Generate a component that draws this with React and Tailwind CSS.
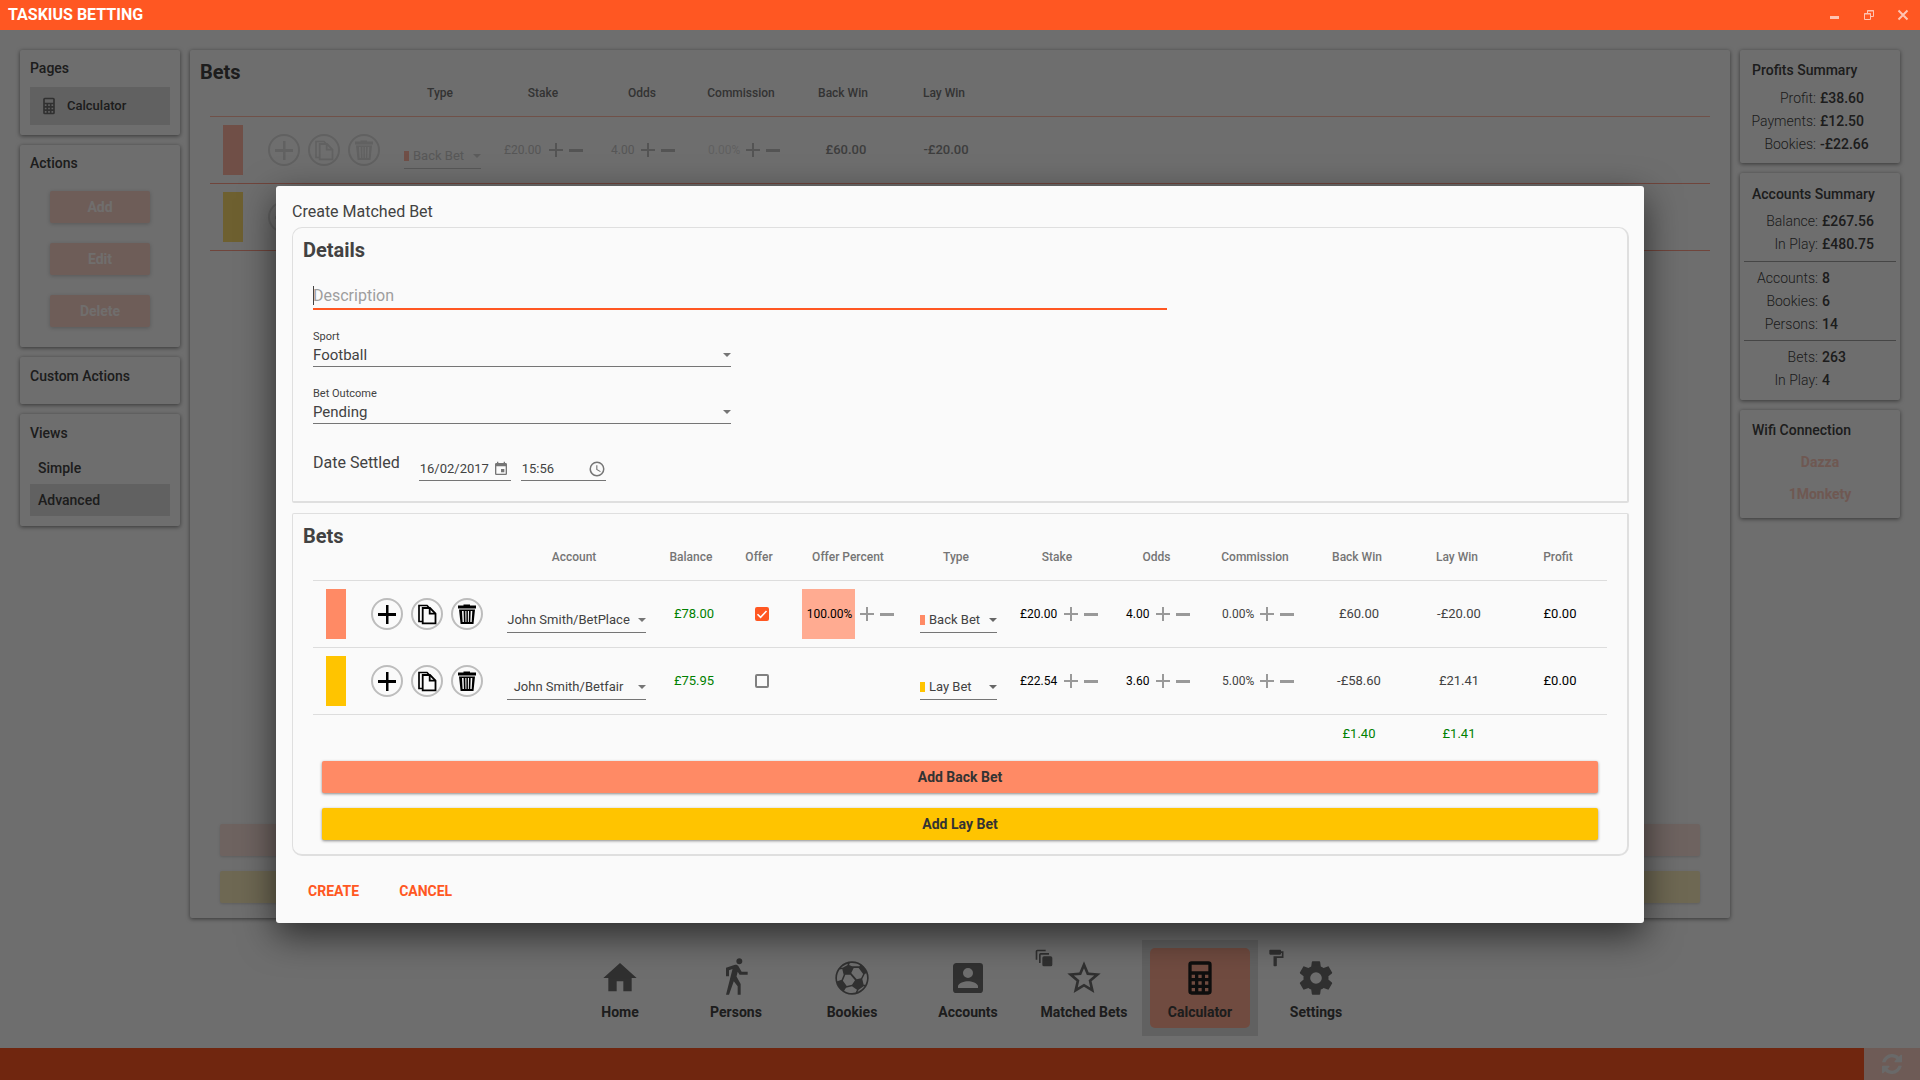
import React from "react";

const PATHS = {
  home: "M10,20V14H14V20H19V12H22L12,3L2,12H5V20H10Z",
  walk: "M14.12,10H19V8.2H15.38L13.38,4.87C13.08,4.37 12.54,4.03 11.92,4.03C11.74,4.03 11.58,4.06 11.42,4.11L6,5.8V11H7.8V7.33L9.91,6.67L6,22H7.8L10.67,13.89L13,17V22H14.8V15.59L12.31,11.05L13.04,8.18M14,3.8C15,3.8 15.8,3 15.8,2C15.8,1 15,0.2 14,0.2C13,0.2 12.2,1 12.2,2C12.2,3 13,3.8 14,3.8Z",
  soccer:
    "M12,2A10,10 0 0,0 2,12A10,10 0 0,0 12,22A10,10 0 0,0 22,12A10,10 0 0,0 12,2M12,3C13.76,3 15.4,3.53 16.78,4.41L16.5,5H13L12,5L10.28,4.16L10.63,3.13C11.08,3.05 11.53,3 12,3M9.53,3.38L9.19,4.41L6.63,5.69L5.38,5.94C6.5,4.73 7.92,3.84 9.53,3.38M13,6H16L18.69,9.59L17.44,12.16L14.81,12.78L11.53,8.94L13,6M6.16,6.66L7,10L5.78,13.06L3.22,13.94C3.08,13.31 3,12.67 3,12C3,10.1 3.59,8.36 4.59,6.91L6.16,6.66M20.56,9.22C20.85,10.09 21,11.03 21,12C21,13.44 20.63,14.79 20.03,16H19L18.16,12.66L19.66,9.66L20.56,9.22M8,10H11L13.81,13.28L12,16L8.84,16.78L6.53,13.69L8,10M12,17L15,19L14.13,20.72C13.44,20.88 12.73,21 12,21C10.25,21 8.63,20.5 7.25,19.63L8.41,17.91L12,17M19,17H19.5C18.5,18.5 17,19.67 15.31,20.34L16,19L19,17Z",
  account:
    "M6,17C6,15 10,13.9 12,13.9C14,13.9 18,15 18,17V18H6M15,9A3,3 0 0,1 12,12A3,3 0 0,1 9,9A3,3 0 0,1 12,6A3,3 0 0,1 15,9M3,5V19A2,2 0 0,0 5,21H19A2,2 0 0,0 21,19V5A2,2 0 0,0 19,3H5C3.89,3 3,3.9 3,5Z",
  star: "M12,15.39L8.24,17.66L9.23,13.38L5.91,10.5L10.29,10.13L12,6.09L13.71,10.13L18.09,10.5L14.77,13.38L15.76,17.66M22,9.24L14.81,8.63L12,2L9.19,8.63L2,9.24L7.45,13.97L5.82,21L12,17.27L18.18,21L16.54,13.97L22,9.24Z",
  calculator:
    "M7,2H17A2,2 0 0,1 19,4V20A2,2 0 0,1 17,22H7A2,2 0 0,1 5,20V4A2,2 0 0,1 7,2M7,4V8H17V4H7M7,10V12H9V10H7M11,10V12H13V10H11M15,10V12H17V10H15M7,14V16H9V14H7M11,14V16H13V14H11M15,14V16H17V14H15M7,18V20H9V18H7M11,18V20H13V18H11M15,18V20H17V18H15Z",
  settings:
    "M12,15.5A3.5,3.5 0 0,1 8.5,12A3.5,3.5 0 0,1 12,8.5A3.5,3.5 0 0,1 15.5,12A3.5,3.5 0 0,1 12,15.5M19.43,12.97C19.47,12.65 19.5,12.33 19.5,12C19.5,11.67 19.47,11.34 19.43,11L21.54,9.37C21.73,9.22 21.78,8.95 21.66,8.73L19.66,5.27C19.54,5.05 19.27,4.96 19.05,5.05L16.56,6.05C16.04,5.66 15.5,5.32 14.87,5.07L14.5,2.42C14.46,2.18 14.25,2 14,2H10C9.75,2 9.54,2.18 9.5,2.42L9.13,5.07C8.5,5.32 7.96,5.66 7.44,6.05L4.95,5.05C4.73,4.96 4.46,5.05 4.34,5.27L2.34,8.73C2.21,8.95 2.27,9.22 2.46,9.37L4.57,11C4.53,11.34 4.5,11.67 4.5,12C4.5,12.33 4.53,12.65 4.57,12.97L2.46,14.63C2.27,14.78 2.21,15.05 2.34,15.27L4.34,18.73C4.46,18.95 4.73,19.03 4.95,18.95L7.44,17.94C7.96,18.34 8.5,18.68 9.13,18.93L9.5,21.58C9.54,21.82 9.75,22 10,22H14C14.25,22 14.46,21.82 14.5,21.58L14.87,18.93C15.5,18.67 16.04,18.34 16.56,17.94L19.05,18.95C19.27,19.03 19.54,18.95 19.66,18.73L21.66,15.27C21.78,15.05 21.73,14.78 21.54,14.63L19.43,12.97Z",
  layers:
    "M4,2A2,2 0 0,0 2,4V14H4V4H14V2H4M8,6A2,2 0 0,0 6,8V18H8V8H18V6H8M12,10A2,2 0 0,0 10,12V20A2,2 0 0,0 12,22H20A2,2 0 0,0 22,20V12A2,2 0 0,0 20,10H12Z",
  paint:
    "M18,4V3A1,1 0 0,0 17,2H5A1,1 0 0,0 4,3V7A1,1 0 0,0 5,8H17A1,1 0 0,0 18,7V6H19V10H9V21A1,1 0 0,0 10,22H12A1,1 0 0,0 13,21V12H21V4H18Z",
  calendar:
    "M19,19H5V8H19M16,1V3H8V1H6V3H5C3.89,3 3,3.89 3,5V19A2,2 0 0,0 5,21H19A2,2 0 0,0 21,19V5C21,3.89 20.1,3 19,3H18V1M17,12H12V17H17V12Z",
  clock:
    "M12,20A8,8 0 0,0 20,12A8,8 0 0,0 12,4A8,8 0 0,0 4,12A8,8 0 0,0 12,20M12,2A10,10 0 0,1 22,12A10,10 0 0,1 12,22C6.47,22 2,17.5 2,12A10,10 0 0,1 12,2M12.5,7V12.25L17,14.92L16.25,16.15L11,13V7H12.5Z",
};

function Icon({ name, className }) {
  return (
    <svg viewBox="0 0 24 24" className={className} fill="currentColor" aria-hidden="true">
      <path d={PATHS[name]} />
    </svg>
  );
}

function Arrow({ className }) {
  return (
    <svg viewBox="0 0 8 4" className={`pointer-events-none h-1 w-2 shrink-0 ${className}`} fill="currentColor" aria-hidden="true">
      <path d="M0 0H8L4 4Z" />
    </svg>
  );
}

function ActionIcons({ faded }) {
  const tone = faded ? "border-[#dcdcdc] text-[#dcdcdc]" : "border-[#bdbdbd] text-black";
  const btn = `flex h-8 w-8 items-center justify-center rounded-full border-2 ${tone}`;
  return (
    <div className="flex gap-2 pl-2.5">
      <button type="button" aria-label="Add row" className={btn}>
        <svg viewBox="0 0 32 32" className="h-8 w-8 shrink-0" fill="currentColor">
          <path d="M7 15H15V7H17.500V15H25V18H17.500V26H15V18H7Z" />
        </svg>
      </button>
      <button type="button" aria-label="Copy row" className={btn}>
        <svg viewBox="0 0 32 32" className="h-8 w-8 shrink-0" fill="none" stroke="currentColor">
          <path d="M11 23.500H8V7.500H16L18 9.500" strokeWidth="1.700" />
          <path d="M11.700 10H19L24.500 15.500V25.300H11.700Z" strokeWidth="1.800" />
          <path d="M18.700 10V15.700H24.500" strokeWidth="1.800" />
        </svg>
      </button>
      <button type="button" aria-label="Delete row" className={btn}>
        <svg viewBox="0 0 32 32" className="h-8 w-8 shrink-0" fill="currentColor">
          <path d="M12.500 6.500H19V7.600H25V10.400H7V7.600H12.500Z" />
          <path
            fillRule="evenodd"
            d="M8 11.400H24L22.500 26H9.600ZM11 13L11.600 24H12.900L12.600 13ZM14.300 13L14.500 24H15.400V13ZM16.900 13V24H17.800L18 13ZM19.700 13L19.300 24H20.700L21.300 13Z"
          />
        </svg>
      </button>
    </div>
  );
}

function Stepper({ value, label, width, valueClass, tone = "text-[#999999]" }) {
  return (
    <div className="flex items-center">
      <span className={`${width} ${valueClass}`}>{value}</span>
      <button type="button" aria-label={`Increase ${label}`} className={tone}>
        <svg viewBox="0 0 14 14" className="h-3.5 w-3.5" fill="currentColor">
          <path d="M6 0H8V6H14V8H8V14H6V8H0V6H6Z" />
        </svg>
      </button>
      <button type="button" aria-label={`Decrease ${label}`} className={`ml-1.5 ${tone}`}>
        <svg viewBox="0 0 14 14" className="h-3.5 w-3.5" fill="currentColor">
          <path d="M0 6H14V9H0Z" />
        </svg>
      </button>
    </div>
  );
}

function TypeSelect({ value, swatch, tone, border }) {
  return (
    <div className="ml-2.5 mt-4 w-[77px]">
      <div className={`flex h-[22px] items-center border-b pb-1 ${border} ${tone}`}>
        <span className={`h-2.5 w-[5px] shrink-0 ${swatch}`} />
        <select aria-label="Bet type" defaultValue={value} className="ml-1 w-full appearance-none bg-transparent text-[13px] leading-4 outline-none">
          <option>Back Bet</option>
          <option>Lay Bet</option>
        </select>
        <Arrow className="opacity-80" />
      </div>
    </div>
  );
}

const SIDE_CARD = "rounded-xs bg-[#fafafa] shadow-[0_1px_4px_rgba(0,0,0,0.5)]";

function SideNav() {
  return (
    <aside className="flex w-40 shrink-0 flex-col gap-2.5 text-sm font-medium leading-5 text-[#424242]">
      <section className={`${SIDE_CARD} px-2.5 pb-2.5 pt-2`}>
        <h2>Pages</h2>
        <button type="button" className="mt-[9px] flex h-[38px] w-full items-center bg-[#dcdcdc] pl-[9px] text-[13px]">
          <Icon name="calculator" className="h-5 w-5 text-[#6d6d6d]" />
          <span className="ml-2">Calculator</span>
        </button>
      </section>
      <section className={`${SIDE_CARD} px-2.5 pb-5 pt-2`}>
        <h2>Actions</h2>
        <div className="mt-[18px] flex flex-col items-center gap-5">
          {["Add", "Edit", "Delete"].map((a) => (
            <button key={a} type="button" disabled className="h-8 w-[100px] rounded-xs bg-[#fad3c8] font-bold text-[#fffaf8] shadow-[0_1px_4px_rgba(0,0,0,0.2)]">
              {a}
            </button>
          ))}
        </div>
      </section>
      <section className={`${SIDE_CARD} px-2.5 pb-[18px] pt-[9px]`}>
        <h2>Custom Actions</h2>
      </section>
      <section className={`${SIDE_CARD} px-2.5 pb-2.5 pt-[9px]`}>
        <h2>Views</h2>
        <button type="button" className="mt-[9px] flex h-8 w-full items-center pl-2">
          Simple
        </button>
        <button type="button" className="flex h-8 w-full items-center bg-[#dcdcdc] pl-2">
          Advanced
        </button>
      </section>
    </aside>
  );
}

function CalculatorPanel() {
  const rows = [
    { type: "Back Bet", color: "bg-[#ffb5a3]", chip: "bg-[#ffb5a3]", stake: "£20.00", odds: "4.00", comm: "0.00%", back: "£60.00", lay: "-£20.00" },
    { type: "Lay Bet", color: "bg-[#fada6d]", chip: "bg-[#fada6d]", stake: "£22.54", odds: "3.60", comm: "5.00%", back: "-£58.60", lay: "£21.41" },
  ];
  return (
    <section className={`${SIDE_CARD} flex min-w-0 flex-1 flex-col pb-[15px] pt-2.5`}>
      <h2 className="pl-2.5 text-xl font-bold leading-6 text-[#424242]">Bets</h2>
      <div className="mx-5">
        <table className="w-full table-fixed border-collapse text-xs">
          <colgroup>
            <col className="w-12" />
            <col className="w-[136px]" />
            <col className="w-[92px]" />
            <col className="w-[114px]" />
            <col className="w-[84px]" />
            <col className="w-[114px]" />
            <col className="w-[90px]" />
            <col className="w-[112px]" />
            <col />
          </colgroup>
          <thead>
            <tr className="border-b border-[#ffb9a6] text-[#757575]">
              {["", "", "Type", "Stake", "Odds", "Commission", "Back Win", "Lay Win", ""].map((h, i) => (
                <th key={i} className="px-0 pb-[15px] pt-px font-medium leading-4">
                  {h}
                </th>
              ))}
            </tr>
          </thead>
          <tbody>
            {rows.map((r) => (
              <tr key={r.type} className="h-[67px] border-b border-[#ff9d88] text-[13px] text-[#d0d0d0]">
                <td className="pl-[13px]">
                  <div className={`h-[50px] w-5 ${r.color}`} />
                </td>
                <td>
                  <ActionIcons faded />
                </td>
                <td>
                  <TypeSelect value={r.type} swatch={r.chip} tone="text-[#c8c8c8]" border="border-[#c8c8c8]" />
                </td>
                <td className="pl-[18px]">
                  <Stepper value={r.stake} label="stake" width="w-[45px]" valueClass="text-[12px] text-[#c4c4c4]" tone="text-[#c0c0c0]" />
                </td>
                <td className="pl-[11px]">
                  <Stepper value={r.odds} label="odds" width="w-[30px]" valueClass="text-[12px] text-[#c4c4c4]" tone="text-[#c0c0c0]" />
                </td>
                <td className="pl-6">
                  <Stepper value={r.comm} label="commission" width="w-[38px]" valueClass="text-[12px] text-[#dadada]" tone="text-[#c0c0c0]" />
                </td>
                <td className="pl-1.5 text-center font-medium text-[#8c8c8c]">{r.back}</td>
                <td className="pl-1 text-center font-medium text-[#8c8c8c]">{r.lay}</td>
                <td />
              </tr>
            ))}
          </tbody>
        </table>
      </div>
      <div className="mx-[30px] mt-auto flex flex-col gap-[15px]">
        <button type="button" aria-label="Add back bet to calculator" className="h-8 rounded-xs bg-[#fae2db] shadow-[0_1px_3px_rgba(0,0,0,0.15)]" />
        <button type="button" aria-label="Add lay bet to calculator" className="h-8 rounded-xs bg-[#faecbe] shadow-[0_1px_3px_rgba(0,0,0,0.15)]" />
      </div>
    </section>
  );
}

function Rows({ items, labelWidth }) {
  return (
    <dl>
      {items.map(([k, v]) => (
        <div key={k} className="flex leading-[23px]">
          <dt className={`${labelWidth} text-right font-light`}>{k}:</dt>
          <dd className="ml-1 font-medium">{v}</dd>
        </div>
      ))}
    </dl>
  );
}

function Summary() {
  return (
    <aside className="flex w-40 shrink-0 flex-col gap-2.5 text-sm leading-5 text-[#424242]">
      <section className={`${SIDE_CARD} pb-[7px] pt-2.5`}>
        <h2 className="pl-3 font-medium">Profits Summary</h2>
        <div className="mt-[7px]">
          <Rows labelWidth="w-[76px]" items={[["Profit", "£38.60"], ["Payments", "£12.50"], ["Bookies", "-£22.66"]]} />
        </div>
      </section>
      <section className={`${SIDE_CARD} px-1 pb-2 pt-[11px]`}>
        <h2 className="pl-2 font-medium">Accounts Summary</h2>
        <div className="mt-1.5 border-b border-[#a0a0a0] pb-[5px]">
          <Rows labelWidth="w-[74px]" items={[["Balance", "£267.56"], ["In Play", "£480.75"]]} />
        </div>
        <div className="border-b border-[#a0a0a0] pb-1 pt-[5px]">
          <Rows labelWidth="w-[74px]" items={[["Accounts", "8"], ["Bookies", "6"], ["Persons", "14"]]} />
        </div>
        <div className="pt-[5px]">
          <Rows labelWidth="w-[74px]" items={[["Bets", "263"], ["In Play", "4"]]} />
        </div>
      </section>
      <section className={`${SIDE_CARD} pb-3.5 pt-2.5`}>
        <h2 className="pl-3 font-medium">Wifi Connection</h2>
        <div className="mt-3 flex flex-col items-center gap-3 font-bold text-[#fcc9bb]">
          <button type="button">Dazza</button>
          <button type="button">1Monkety</button>
        </div>
      </section>
    </aside>
  );
}

function BottomNav() {
  const items = [
    { label: "Home", icon: "home" },
    { label: "Persons", icon: "walk" },
    { label: "Bookies", icon: "soccer" },
    { label: "Accounts", icon: "account" },
    { label: "Matched Bets", icon: "star", badge: "layers" },
    { label: "Calculator", icon: "calculator", active: true },
    { label: "Settings", icon: "settings", badge: "paint" },
  ];
  return (
    <nav className="mb-3 mt-[22px] flex justify-center pl-4">
      {items.map((i) => (
        <button key={i.label} type="button" className={`relative flex h-24 w-[116px] p-2 ${i.active ? "bg-[#dcdcdc]" : ""}`}>
          {i.badge && <Icon name={i.badge} className="absolute left-2 top-2 h-5 w-5 text-[#6d6d6d]" />}
          <span className={`flex h-20 w-full flex-col items-center rounded-[5px] pt-2.5 ${i.active ? "bg-[#ffab91] text-[#212121]" : "text-[#6d6d6d]"}`}>
            <Icon name={i.icon} className="h-10 w-10" />
            <span className="mt-1 text-sm font-bold leading-5 text-[#424242]">{i.label}</span>
          </span>
        </button>
      ))}
    </nav>
  );
}

function SelectField({ id, label, value, options }) {
  return (
    <div className="mt-[19px] flex w-[418px] max-w-full flex-col">
      <label htmlFor={id} className="text-[11px] leading-4">
        {label}
      </label>
      <div className="flex h-[22px] items-center border-b border-[#757575] pb-px">
        <select id={id} defaultValue={value} className="h-full w-full appearance-none bg-transparent pb-0.5 text-[15px] leading-5 outline-none">
          {options.map((o) => (
            <option key={o}>{o}</option>
          ))}
        </select>
        <Arrow className="text-[#757575]" />
      </div>
    </div>
  );
}

const CARD = "ml-4 mr-[15px] border border-b-2 border-r-2 border-[#dfdfdf]";

function DetailsCard() {
  return (
    <section className={`${CARD} rounded-t-[10px] rounded-b-xs pb-5 pt-2.5`}>
      <h3 className="pl-2.5 text-xl font-bold leading-6">Details</h3>
      <div className="mx-5">
        <div className="relative mt-[22px]">
          <input
            aria-label="Description"
            placeholder="Description"
            className="block h-[26px] w-[66%] border-b-2 border-[#ff5722] bg-transparent pb-0.5 text-base caret-transparent outline-none placeholder:text-[#9e9e9e]"
          />
          <span className="pointer-events-none absolute left-0 top-0.5 h-[19px] w-px bg-[#424242]" />
        </div>
        <SelectField id="sport" label="Sport" value="Football" options={["Football", "Tennis", "Cricket"]} />
        <SelectField id="outcome" label="Bet Outcome" value="Pending" options={["Pending", "Back Win", "Lay Win"]} />
        <div className="mt-[27px] flex h-[30px] items-end">
          <label htmlFor="date" className="self-start text-base leading-6">
            Date Settled
          </label>
          <div className="ml-[19px] flex h-[23px] w-[92px] items-center border-b border-[#757575]">
            <input id="date" defaultValue="16/02/2017" className="w-[74px] bg-transparent pl-px text-[13px] leading-4 outline-none" />
            <button type="button" aria-label="Choose date" className="text-[#757575]">
              <Icon name="calendar" className="h-4 w-4" />
            </button>
          </div>
          <div className="ml-2.5 flex h-[23px] w-[85px] items-center border-b border-[#757575]">
            <input aria-label="Time settled" defaultValue="15:56" className="w-[67px] bg-transparent pl-px text-[13px] leading-4 outline-none" />
            <button type="button" aria-label="Choose time" className="text-[#757575]">
              <Icon name="clock" className="h-[18px] w-[18px]" />
            </button>
          </div>
        </div>
      </div>
    </section>
  );
}

function BetsCard() {
  const rows = [
    {
      color: "bg-[#ff8a65]", account: "John Smith/BetPlace", balance: "£78.00", offer: true, percent: "100.00%",
      type: "Back Bet", stake: "£20.00", odds: "4.00", comm: "0.00%", back: "£60.00", lay: "-£20.00", profit: "£0.00",
    },
    {
      color: "bg-[#ffc400]", account: "John Smith/Betfair", balance: "£75.95", offer: false, percent: null,
      type: "Lay Bet", stake: "£22.54", odds: "3.60", comm: "5.00%", back: "-£58.60", lay: "£21.41", profit: "£0.00",
    },
  ];
  const heads = ["", "", "Account", "Balance", "Offer", "Offer Percent", "Type", "Stake", "Odds", "Commission", "Back Win", "Lay Win", "Profit"];
  const add = "h-8 rounded-xs text-sm font-bold text-[#333333] shadow-[0_1px_3px_rgba(0,0,0,0.45)]";
  return (
    <section className={`${CARD} mt-2.5 rounded-t-xs rounded-b-[10px] pb-3.5 pt-2.5`}>
      <h3 className="pl-2.5 text-xl font-bold leading-6">Bets</h3>
      <div className="mx-5">
        <table className="w-full table-fixed border-collapse text-xs">
          <colgroup>
            <col className="w-12" />
            <col className="w-[137px]" />
            <col className="w-[152px]" />
            <col className="w-[82px]" />
            <col className="w-[54px]" />
            <col className="w-[124px]" />
            <col className="w-[92px]" />
            <col className="w-[110px]" />
            <col className="w-[89px]" />
            <col className="w-[108px]" />
            <col className="w-24" />
            <col className="w-[104px]" />
            <col />
          </colgroup>
          <thead>
            <tr className="border-b border-[#dddddd] text-[#757575]">
              {heads.map((h, i) => (
                <th key={i} className="px-0 pb-[15px] pt-px font-medium leading-4">
                  {h}
                </th>
              ))}
            </tr>
          </thead>
          <tbody className="text-center">
            {rows.map((r) => (
              <tr key={r.account} className="h-[67px] border-b border-[#dddddd] text-[13px]">
                <td className="pl-[13px]">
                  <div className={`h-[50px] w-5 ${r.color}`} />
                </td>
                <td>
                  <ActionIcons />
                </td>
                <td>
                  <div className="ml-[9px] mt-4 flex h-[22px] w-[139px] items-center border-b border-[#757575] pb-1">
                    <select aria-label="Account" defaultValue={r.account} className="mr-2 w-full appearance-none bg-transparent text-[13px] leading-4 outline-none [text-align-last:center]">
                      <option>John Smith/BetPlace</option>
                      <option>John Smith/Betfair</option>
                    </select>
                    <Arrow className="text-[#757575]" />
                  </div>
                </td>
                <td className="pl-1.5 text-[#008000]">{r.balance}</td>
                <td className="pl-1.5">
                  <label className="relative mx-auto block h-3.5 w-3.5">
                    <input
                      type="checkbox"
                      aria-label="Offer"
                      defaultChecked={r.offer}
                      className="peer absolute inset-0 h-3.5 w-3.5 appearance-none rounded-xs border-2 border-[#808080] checked:border-[#ff5722] checked:bg-[#ff5722]"
                    />
                    <svg viewBox="0 0 14 14" className="pointer-events-none absolute inset-0 hidden h-3.5 w-3.5 peer-checked:block" fill="none" stroke="#ffffff" strokeWidth="1.600">
                      <path d="M2.500 7.200L5.600 10.300L11.500 4" />
                    </svg>
                  </label>
                </td>
                <td className="pl-4">
                  {r.percent && (
                    <Stepper value={r.percent} label="offer percent" width="w-[53px] mr-[5px]" valueClass="h-[50px] bg-[#ffab91] pl-0.5 leading-[50px] text-[12px] text-black" />
                  )}
                </td>
                <td className="text-left">
                  <TypeSelect value={r.type} swatch={r.color} tone="text-[#424242]" border="border-[#757575]" />
                </td>
                <td className="pl-[18px] text-left">
                  <Stepper value={r.stake} label="stake" width="w-11" valueClass="text-[12px] text-black" />
                </td>
                <td className="pl-3.5 text-left">
                  <Stepper value={r.odds} label="odds" width="w-[30px]" valueClass="text-[12px] text-black" />
                </td>
                <td className="pl-[21px] text-left">
                  <Stepper value={r.comm} label="commission" width="w-[38px]" valueClass="text-[12px]" />
                </td>
                <td className="pl-1">{r.back}</td>
                <td className="pl-1">{r.lay}</td>
                <td className="pl-1 text-black">{r.profit}</td>
              </tr>
            ))}
          </tbody>
          <tfoot className="text-center text-[13px] leading-[18px] text-[#008000]">
            <tr>
              <td colSpan={10} />
              <td className="pb-[18px] pl-1 pt-2.5">£1.40</td>
              <td className="pb-[18px] pl-1 pt-2.5">£1.41</td>
              <td />
            </tr>
          </tfoot>
        </table>
      </div>
      <div className="mx-[29px] flex flex-col gap-[15px]">
        <button type="button" className={`${add} bg-[#ff8a65]`}>Add Back Bet</button>
        <button type="button" className={`${add} bg-[#ffc400]`}>Add Lay Bet</button>
      </div>
    </section>
  );
}

export default function App() {
  return (
    <div className="flex min-h-screen flex-col bg-[#fafafa] font-[Roboto,sans-serif] text-[#424242]">
      <header className="flex h-[30px] items-center justify-between bg-[#ff5722] text-white">
        <h1 className="pl-2 text-base font-bold leading-5">TASKIUS BETTING</h1>
        <div className="flex text-[#ffc3b2]">
          <button type="button" aria-label="Minimize" className="flex h-[30px] w-[34px] items-center justify-center">
            <svg viewBox="0 0 12 12" className="h-3 w-3" fill="currentColor">
              <path d="M1 7H10V10H1Z" />
            </svg>
          </button>
          <button type="button" aria-label="Restore" className="flex h-[30px] w-[34px] items-center justify-center">
            <svg viewBox="0 0 12 12" className="h-3 w-3" fill="none" stroke="currentColor">
              <path d="M4.500 4V1.500H10.500V7.500H8" />
              <path d="M4 2H11" />
              <path d="M1.500 4.500H7.500V10.500H1.500ZM1 5H8" />
            </svg>
          </button>
          <button type="button" aria-label="Close" className="flex h-[30px] w-[34px] items-center justify-center">
            <svg viewBox="0 0 12 12" className="h-3 w-3" fill="none" stroke="currentColor" strokeWidth="2">
              <path d="M1.500 1.500L10.500 10.500M10.500 1.500L1.500 10.500" />
            </svg>
          </button>
        </div>
      </header>

      <div className="relative flex flex-1 flex-col">
        <main className="flex flex-1 gap-2.5 px-5 pt-5">
          <SideNav />
          <CalculatorPanel />
          <Summary />
        </main>
        <BottomNav />
        <footer className="flex h-8 justify-end bg-[#ff5722]">
          <button type="button" aria-label="Refresh" className="flex h-8 w-14 items-center justify-center bg-[#fad0c4] text-[#f0f0f0]">
            <svg viewBox="0 0 1536 1536" className="h-5 w-5" fill="currentColor">
              <path d="M1511 928q0 5-1 7-64 268-268 434.500T764 1536q-146 0-282.500-55T238 1324l-129 129q-19 19-45 19t-45-19-19-45V960q0-26 19-45t45-19h448q26 0 45 19t19 45-19 45l-137 137q71 66 161 102t187 36q134 0 250-65t186-179q11-17 53-117 8-23 30-23h192q13 0 22.500 9.500t9.500 22.500zm25-800v448q0 26-19 45t-45 19h-448q-26 0-45-19t-19-45 19-45l138-138Q969 256 768 256q-134 0-250 65T332 500q-11 17-53 117-8 23-30 23H50q-13 0-22.500-9.500T18 608v-7q65-268 270-434.500T768 0q146 0 284 55.500T1297 212l130-129q19-19 45-19t45 19 19 45z" />
            </svg>
          </button>
        </footer>

        <div className="absolute inset-0 flex items-center justify-center bg-black/56 pb-px">
          <div
            role="dialog"
            aria-modal="true"
            aria-labelledby="dialog-title"
            className="w-[71.25%] rounded-[3px] bg-[#fafafa] pb-[22px] pt-3.5 shadow-[0_12px_36px_rgba(0,0,0,0.6)]"
          >
            <h2 id="dialog-title" className="mb-[3px] px-4 text-base leading-6">
              Create Matched Bet
            </h2>
            <DetailsCard />
            <BetsCard />
            <div className="mt-[25px] flex gap-10 px-8 text-sm font-bold leading-5 text-[#ff5722]">
              <button type="button">CREATE</button>
              <button type="button">CANCEL</button>
            </div>
          </div>
        </div>
      </div>
    </div>
  );
}
